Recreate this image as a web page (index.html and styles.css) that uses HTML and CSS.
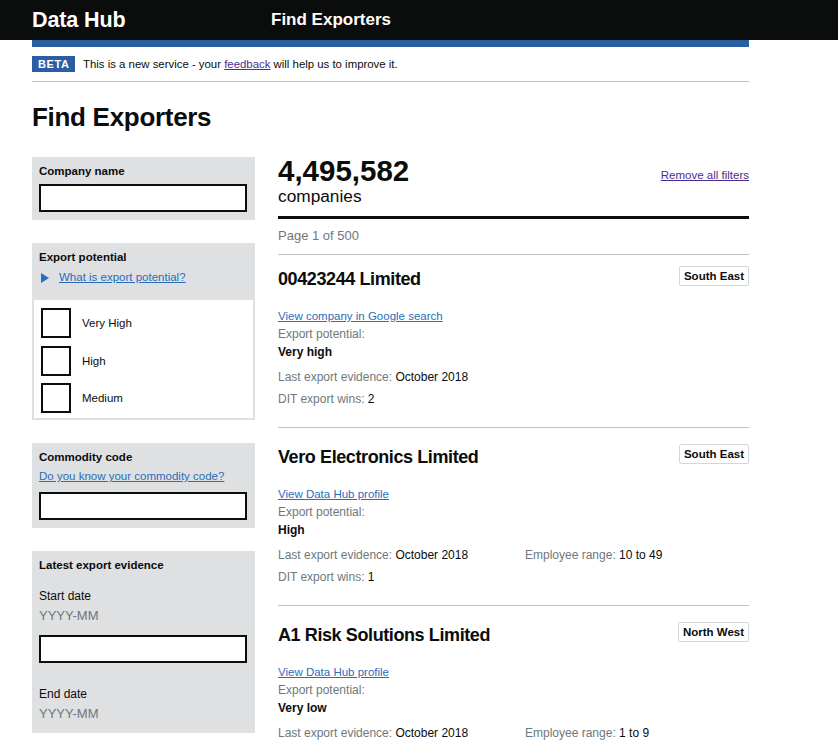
FILE: index.html
```html
<!DOCTYPE html>
<html lang="en">
<head>
<meta charset="utf-8">
<title>Find Exporters - Data Hub</title>
<link rel="stylesheet" href="styles.css">
</head>
<body>
<header class="topbar">
  <div class="topbar-inner">
    <span class="brand">Data Hub</span>
    <span class="service">Find Exporters</span>
  </div>
</header>
<div class="page">
  <div class="bluebar"></div>
  <div class="beta">
    <strong class="beta-tag">BETA</strong>
    <span class="beta-text">This is a new service - your <a class="visited" href="#">feedback</a> will help us to improve it.</span>
  </div>
  <h1 class="title">Find Exporters</h1>
  <div class="layout">
    <aside class="filters">
      <div class="panel">
        <div class="panel-label">Company name</div>
        <div class="input"></div>
      </div>
      <div class="panel panel-checks">
        <div class="panel-head">
          <div class="panel-label">Export potential</div>
          <div class="details"><span class="tri"></span><a href="#" class="link">What is export potential?</a></div>
        </div>
        <div class="checks">
          <div class="check"><span class="box"></span><span class="check-label">Very High</span></div>
          <div class="check"><span class="box"></span><span class="check-label">High</span></div>
          <div class="check"><span class="box"></span><span class="check-label">Medium</span></div>
        </div>
      </div>
      <div class="panel">
        <div class="panel-label">Commodity code</div>
        <a href="#" class="link panel-link">Do you know your commodity code?</a>
        <div class="input input-gap"></div>
      </div>
      <div class="panel panel-dates">
        <div class="panel-label">Latest export evidence</div>
        <div class="date-label first">Start date</div>
        <div class="hint">YYYY-MM</div>
        <div class="input date-input"></div>
        <div class="date-label second">End date</div>
        <div class="hint">YYYY-MM</div>
      </div>
    </aside>
    <main class="results">
      <div class="summary">
        <div class="count-block">
          <div class="count">4,495,582</div>
          <div class="count-sub">companies</div>
        </div>
        <a href="#" class="visited remove">Remove all filters</a>
      </div>
      <div class="pager">Page 1 of 500</div>
      <div class="card first-card">
        <div class="card-head">
          <h2 class="card-title">00423244 Limited</h2>
          <span class="region">South East</span>
        </div>
        <a href="#" class="link card-link">View company in Google search</a>
        <div class="muted">Export potential:</div>
        <div class="strong">Very high</div>
        <div class="meta-row meta-first"><span class="meta"><span class="muted">Last export evidence: </span>October 2018</span></div>
        <div class="meta-row"><span class="meta"><span class="muted">DIT export wins: </span>2</span></div>
      </div>
      <div class="card">
        <div class="card-head">
          <h2 class="card-title">Vero Electronics Limited</h2>
          <span class="region">South East</span>
        </div>
        <a href="#" class="link card-link">View Data Hub profile</a>
        <div class="muted">Export potential:</div>
        <div class="strong">High</div>
        <div class="meta-row meta-first"><span class="meta"><span class="muted">Last export evidence: </span>October 2018</span><span class="meta"><span class="muted">Employee range: </span>10 to 49</span></div>
        <div class="meta-row"><span class="meta"><span class="muted">DIT export wins: </span>1</span></div>
      </div>
      <div class="card">
        <div class="card-head">
          <h2 class="card-title">A1 Risk Solutions Limited</h2>
          <span class="region">North West</span>
        </div>
        <a href="#" class="link card-link">View Data Hub profile</a>
        <div class="muted">Export potential:</div>
        <div class="strong">Very low</div>
        <div class="meta-row meta-first"><span class="meta"><span class="muted">Last export evidence: </span>October 2018</span><span class="meta"><span class="muted">Employee range: </span>1 to 9</span></div>
        <div class="meta-row"><span class="meta"><span class="muted">DIT export wins: </span>0</span></div>
      </div>
    </main>
  </div>
</div>
</body>
</html>
```
FILE: styles.css
```css
* { box-sizing: border-box; }
html, body { margin: 0; padding: 0; }
body {
  font-family: "Liberation Sans", Arial, sans-serif;
  color: #0b0c0c;
  background: #ffffff;
  width: 838px;
  overflow: hidden;
}
a { color: #2a6ebb; text-decoration: underline; }
a.visited { color: #4c2c92; }

.topbar {
  background: #0b0c0c;
  height: 40px;
  color: #ffffff;
}
.topbar-inner {
  margin-left: 32px;
  display: flex;
  align-items: center;
  height: 40px;
}
.brand {
  width: 239px;
  font-weight: 700;
  font-size: 21.5px;
  letter-spacing: -0.1px;
}
.service {
  font-weight: 700;
  font-size: 17px;
}

.page {
  margin-left: 32px;
  width: 717px;
}
.bluebar {
  height: 7px;
  background: #2a5ea3;
}
.beta {
  display: flex;
  align-items: center;
  gap: 8px;
  padding: 9px 0 9px;
  border-bottom: 1px solid #bfc1c3;
}
.beta-tag {
  background: #2a5ea3;
  color: #ffffff;
  font-size: 11px;
  letter-spacing: 0.6px;
  line-height: 16px;
  height: 16px;
  padding: 0 6px;
  width: 43px;
  text-align: center;
}
.beta-text {
  font-size: 11.4px;
  line-height: 16px;
}

.title {
  font-size: 26px;
  line-height: 32px;
  font-weight: 700;
  margin: 19px 0 24px;
  letter-spacing: -0.3px;
}

.layout {
  display: grid;
  grid-template-columns: 223px 471px;
  column-gap: 23px;
  align-items: start;
}

.filters {
  display: flex;
  flex-direction: column;
  gap: 23px;
}
.panel {
  background: #dee0e2;
  padding: 5px 8px 8px 7px;
  display: flex;
  flex-direction: column;
}
.panel-label {
  font-weight: 700;
  font-size: 11.5px;
  line-height: 18px;
}
.input {
  height: 28px;
  border: 2px solid #0b0c0c;
  background: #ffffff;
  margin-top: 4px;
}
.input-gap { margin-top: 7px; }
.link { font-size: 11.5px; line-height: 18px; }
.panel-link { margin-top: 1px; }

.panel-checks { padding: 0 2px 2px; }
.panel-head { padding: 5px 6px 14px 5px; }
.details {
  margin-top: 2px;
  display: flex;
  align-items: center;
  line-height: 18px;
}
.tri {
  width: 0;
  height: 0;
  border-top: 5px solid transparent;
  border-bottom: 5px solid transparent;
  border-left: 8px solid #2a6ebb;
  margin: 2px 10px 0 2px;
}
.checks {
  background: #ffffff;
  padding: 8px 7px 5px;
  display: flex;
  flex-direction: column;
  gap: 7.5px;
}
.check {
  display: flex;
  align-items: center;
  gap: 11px;
}
.box {
  width: 30px;
  height: 30px;
  border: 2px solid #0b0c0c;
  background: #ffffff;
  flex: none;
}
.check-label {
  font-size: 11.5px;
}

.panel-dates { padding-bottom: 10px; }
.date-label {
  font-size: 12px;
  line-height: 18px;
}
.date-label.first { margin-top: 13px; }
.date-label.second { margin-top: 22px; }
.hint {
  color: #6f777b;
  font-size: 13px;
  line-height: 18px;
  margin-top: 2px;
}
.date-input { margin-top: 10px; }

.results { display: flex; flex-direction: column; }
.summary {
  display: flex;
  justify-content: space-between;
  align-items: flex-start;
  padding-bottom: 9px;
  border-bottom: 3px solid #0b0c0c;
}
.count {
  font-size: 29.5px;
  line-height: 28px;
  font-weight: 700;
}
.count-sub {
  font-size: 17.3px;
  line-height: 22px;
}
.remove {
  font-size: 11.5px;
  line-height: 18px;
  margin-top: 9px;
}
.pager {
  color: #6f777b;
  font-size: 13px;
  line-height: 18px;
  padding: 8px 0 9px;
  border-bottom: 1px solid #bfc1c3;
}

.card {
  padding: 16px 0 19px;
  border-bottom: 1px solid #bfc1c3;
  display: flex;
  flex-direction: column;
  font-size: 12px;
  line-height: 18px;
}
.first-card { padding-top: 11px; }
.card-head {
  display: flex;
  justify-content: space-between;
  align-items: flex-start;
}
.card-title {
  margin: 1px 0 0;
  font-size: 18px;
  line-height: 24px;
  font-weight: 700;
  letter-spacing: -0.4px;
}
.region {
  font-weight: 700;
  font-size: 11.5px;
  line-height: 18px;
  padding: 0 4px;
  border: 1px solid #d5d6d7;
  border-radius: 2px;
}
.card-link {
  margin-top: 16px;
  font-size: 11.5px;
  align-self: flex-start;
}
.muted { color: #6f777b; }
.strong { font-weight: 700; }
.meta-row { display: flex; margin-top: 4px; }
.meta-row.meta-first { margin-top: 7px; }
.meta { flex: none; }
.meta:first-child { width: 247px; }
```
